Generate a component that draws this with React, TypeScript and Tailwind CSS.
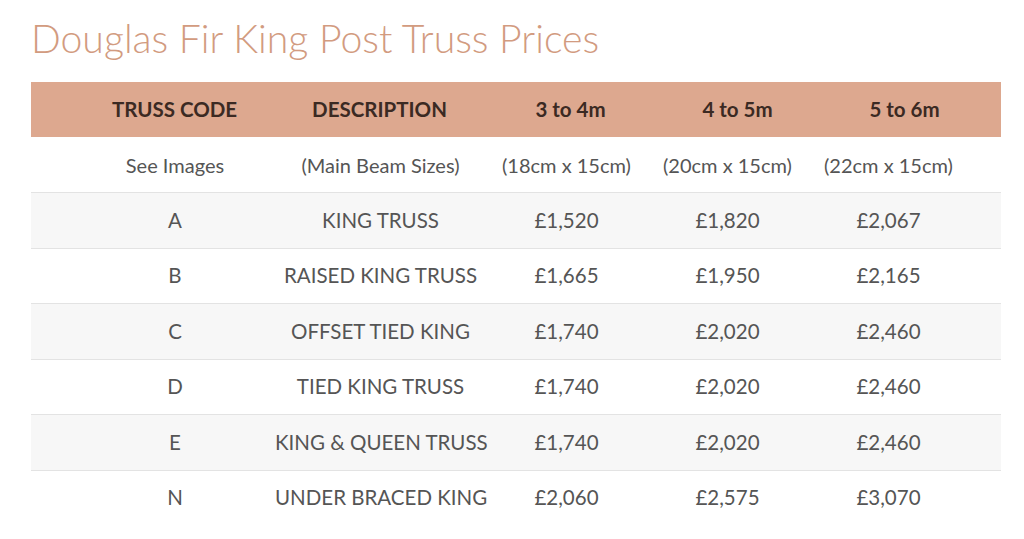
const rows = [
  { code: 'A', desc: 'KING TRUSS', p: ['£1,520', '£1,820', '£2,067'] },
  { code: 'B', desc: 'RAISED KING TRUSS', p: ['£1,665', '£1,950', '£2,165'] },
  { code: 'C', desc: 'OFFSET TIED KING', p: ['£1,740', '£2,020', '£2,460'] },
  { code: 'D', desc: 'TIED KING TRUSS', p: ['£1,740', '£2,020', '£2,460'] },
  { code: 'E', desc: 'KING & QUEEN TRUSS', p: ['£1,740', '£2,020', '£2,460'] },
  { code: 'N', desc: 'UNDER BRACED KING', p: ['£2,060', '£2,575', '£3,070'] },
];

const bodyCols = 'grid grid-cols-[200px_211px_161px_161px_161px] pl-[44px] items-center text-center';

export default function App() {
  return (
    <div className="min-h-screen bg-white font-['Lato',sans-serif]">
      <div className="pl-[31px] pr-[23px] pt-[14px]">
        <h1 className="text-[39.2px] font-light leading-[48px] text-[#d29b80]">
          Douglas Fir King Post Truss Prices
        </h1>

        <div className="mt-[20px] w-[970px]">
          <div className="grid h-[55px] grid-cols-[195px_215px_167px_167px_167px] items-center bg-[#dda88f] pl-[46px] text-center text-[20.5px] font-bold text-[#3b2a23]">
            <div>TRUSS CODE</div>
            <div>DESCRIPTION</div>
            <div>3 to 4m</div>
            <div>4 to 5m</div>
            <div>5 to 6m</div>
          </div>

          <div className={`${bodyCols} h-[55px] bg-white text-[20px] text-[#555555]`}>
            <div>See Images</div>
            <div className="whitespace-nowrap">(Main Beam Sizes)</div>
            <div>(18cm x 15cm)</div>
            <div>(20cm x 15cm)</div>
            <div>(22cm x 15cm)</div>
          </div>

          {rows.map((r, i) => (
            <div
              key={r.code}
              className={`${bodyCols} h-[55.5px] border-t border-[#e3e3e3] text-[20.5px] text-[#555555] ${
                i % 2 === 0 ? 'bg-[#f7f7f7]' : 'bg-white'
              }`}
            >
              <div>{r.code}</div>
              <div className="whitespace-nowrap">{r.desc}</div>
              <div>{r.p[0]}</div>
              <div>{r.p[1]}</div>
              <div>{r.p[2]}</div>
            </div>
          ))}
        </div>
      </div>
    </div>
  );
}
